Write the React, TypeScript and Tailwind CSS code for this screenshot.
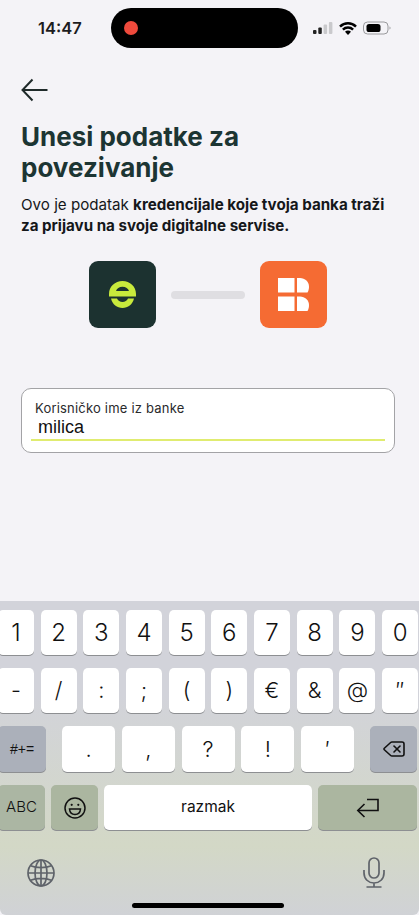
import { ReactNode } from "react";
import { Delete } from "lucide-react";

const inter = "font-['Inter',sans-serif]";

const row1 = ["1", "2", "3", "4", "5", "6", "7", "8", "9", "0"];
const row2 = ["-", "/", ":", ";", "(", ")", "€", "&", "@", "″"];
const row3 = [".", ",", "?", "!", "′"];

const Key = ({ children, className = "" }: { children: ReactNode; className?: string }) => (
  <div
    className={`flex items-center justify-center rounded-[5px] bg-white text-[#111] shadow-[0_1px_0_#8d8f92] ${className}`}
  >
    {children}
  </div>
);

const StatusBar = () => (
  <div className="flex h-[40px] items-center mt-2 shrink-0">
    <span className={`${inter} ml-[38px] w-[73px] text-[16.500px] font-semibold text-[#1c1c1e]`}>14:47</span>
    <div className="flex h-[40px] w-[187px] items-center rounded-[20px] bg-black pl-[13px]">
      <div className="h-[14px] w-[14px] rounded-full bg-[#ef4a3c]" />
    </div>
    <div className="ml-[15px] flex items-center">
      <svg width="20" height="14" viewBox="0 0 20 14">
        <rect x="0" y="9" width="3.500" height="4" rx="1" fill="#222" />
        <rect x="5.300" y="6.500" width="3.500" height="6.500" rx="1" fill="#222" />
        <rect x="10.600" y="3.500" width="3.500" height="9.500" rx="1" fill="#c9c9cc" />
        <rect x="15.900" y="1" width="3.500" height="12" rx="1" fill="#c9c9cc" />
      </svg>
      <svg width="18" height="13" viewBox="0 0 18 13" className="ml-[6px]">
        <path d="M1 4.600a11.500 11.500 0 0 1 16 0" fill="none" stroke="#000" strokeWidth="2.500" />
        <path d="M3.900 7.600a7.400 7.400 0 0 1 10.200 0" fill="none" stroke="#000" strokeWidth="2.500" />
        <path d="M6 9.700 9 12.900l3-3.200a4.200 4.200 0 0 0-6 0z" fill="#000" />
      </svg>
      <svg width="28" height="14" viewBox="0 0 28 14" className="ml-[6px]">
        <rect x="0.500" y="1" width="24.500" height="12" rx="4" fill="none" stroke="#9a9a9d" />
        <rect x="3.500" y="3" width="14" height="8" rx="2.600" fill="#000" />
        <path d="M26.500 5.500v3c.6-.2 1-.8 1-1.500s-.4-1.300-1-1.500z" fill="#9a9a9d" />
      </svg>
    </div>
  </div>
);

const EmoneyLogo = () => (
  <div className="flex h-[67px] w-[67px] items-center justify-center rounded-[9px] bg-[#1c3230]">
    <svg width="27" height="27" viewBox="0 0 27 27" fill="#c8ea3c">
      <path
        d="M0 15.500V13C0 5.500 6 0 13.500 0S27 5.500 27 13v2.500zM7 10h13C19.200 7.300 16.800 5.700 13.500 5.700S7.800 7.300 7 10z"
        fillRule="evenodd"
      />
      <path d="M2 17.500h6C9 19.700 11 21 13.500 21s4.500-1.300 5.500-3.500h6C23.500 23.500 19 27 13.500 27S3.500 23.500 2 17.500z" />
    </svg>
  </div>
);

const BankLogo = () => (
  <div className="flex h-[67px] w-[67px] items-center justify-center rounded-[9px] bg-[#f56b33]">
    <svg width="31" height="33" viewBox="0 0 31 33" fill="#fff">
      <rect x="0" y="0" width="16.500" height="14.500" />
      <path d="M19 0h3c5 0 9 4 9 8.500 0 2.300-.5 4.300-1.500 6H19z" />
      <rect x="0" y="18.500" width="16.500" height="14.500" />
      <path d="M19 18.500h3c5 0 9 4 9 8.500 0 2.300-.5 4.300-1.500 6H19z" />
    </svg>
  </div>
);

const GlobeIcon = () => (
  <svg width="28" height="28" viewBox="0 0 28 28" fill="none" stroke="#5f636a" strokeWidth="1.700">
    <circle cx="14" cy="14" r="13" />
    <ellipse cx="14" cy="14" rx="6" ry="13" />
    <path d="M14 1v26M1 14h26M3.500 6.800c6 2.400 15 2.400 21 0M3.500 21.200c6-2.400 15-2.400 21 0" />
  </svg>
);

const MicIcon = () => (
  <svg width="22" height="31" viewBox="0 0 22 31" fill="none" stroke="#5f636a" strokeWidth="1.700">
    <rect x="6" y="1" width="10" height="20" rx="5" />
    <path d="M1 13v3c0 6 4.500 10 10 10s10-4 10-10v-3M11 26v4M3.500 30h15" />
  </svg>
);

const Keyboard = () => (
  <div
    className={`${inter} mt-auto flex h-[314px] shrink-0 flex-col overflow-hidden rounded-b-[6px] bg-gradient-to-b from-[#d2d3da] from-30% via-[#d3d8c6] via-78% to-[#d0d2d6] pt-[9px]`}
  >
    <div className="-ml-[2px] grid h-[45px] w-[420px] grid-cols-10 gap-x-[6.800px] text-[24px] font-light">
      {row1.map((k) => (
        <Key key={k}>{k}</Key>
      ))}
    </div>
    <div className="-ml-[2px] mt-[13px] grid h-[45px] w-[420px] grid-cols-10 gap-x-[6.800px] text-[22px] font-light">
      {row2.map((k) => (
        <Key key={k}>{k}</Key>
      ))}
    </div>
    <div className="mt-[13px] flex h-[46px] text-[22px] font-light">
      <Key className="-ml-[2px] w-[48px] !bg-[#abb0ba] font-['Liberation_Sans',sans-serif] text-[14px] !font-normal">#+=</Key>
      <div className="ml-[16px] flex gap-x-[6.750px]">
        {row3.map((k) => (
          <Key key={k} className="w-[53px]">
            {k}
          </Key>
        ))}
      </div>
      <Key className="ml-[16px] w-[47px] !bg-[#abb0ba]">
        <Delete size={24} strokeWidth={1.6} />
      </Key>
    </div>
    <div className="mt-[13px] flex h-[45px] gap-x-[6px]">
      <Key className="-ml-[2px] w-[47px] !bg-[#abb6a3] text-[15px] font-light">ABC</Key>
      <Key className="w-[47px] !bg-[#abb6a0]">
        <svg width="24" height="24" viewBox="0 0 24 24" fill="none" stroke="#111" strokeWidth="1.500">
          <circle cx="12" cy="12" r="10" />
          <path d="M6.500 13h11c-.3 3.500-2.700 5.500-5.500 5.500S6.800 16.500 6.500 13z" />
          <circle cx="8.700" cy="8.800" r="1.100" fill="#111" stroke="none" />
          <circle cx="15.300" cy="8.800" r="1.100" fill="#111" stroke="none" />
        </svg>
      </Key>
      <Key className="w-[208px] pb-[2px] text-[15.500px]">razmak</Key>
      <Key className="w-[99px] !bg-[#abb6a0]">
        <svg width="23" height="20" viewBox="0 0 23 20" fill="none" stroke="#111" strokeWidth="1.600">
          <path d="M11 1.500h11v11H2" />
          <path d="M8.500 6 1.800 12.500 8.500 19" />
        </svg>
      </Key>
    </div>
    <div className="mt-[27px] flex items-center justify-between pl-[27px] pr-[34px]">
      <GlobeIcon />
      <MicIcon />
    </div>
    <div className="ml-[132px] mt-[15px] h-[5px] w-[152px] rounded-full bg-black" />
  </div>
);

export default function App() {
  return (
    <div className="flex h-[915px] w-[419px] flex-col overflow-hidden bg-[#f4f3f7]">
      <StatusBar />
      <div className="mt-[30px] pl-[21px]">
        <svg width="27" height="24" viewBox="0 0 27 24" fill="none" stroke="#1f2a2a" strokeWidth="2">
          <path d="M26.500 12H1.500" />
          <path d="M11.500 1.500 1.500 12l10 10.500" />
        </svg>
      </div>
      <h1 className={`${inter} mt-[19px] px-[21px] text-[26px] font-bold leading-[31px] text-[#1c3533]`}>
        Unesi podatke za
        <br />
        povezivanje
      </h1>
      <p className={`${inter} mt-[11px] whitespace-nowrap px-[21px] text-[15.150px] leading-[21px] text-[#15171a]`}>
        Ovo je podatak <b className="font-bold">kredencijale koje tvoja banka traži</b>
        <br />
        <b className="font-bold">za prijavu na svoje digitalne servise.</b>
      </p>
      <div className="mt-[25px] flex items-center justify-center gap-x-[15px] pr-[3px]">
        <EmoneyLogo />
        <div className="h-[8px] w-[74px] rounded-full bg-[#dfdee2]" />
        <BankLogo />
      </div>
      <div className="mx-[21px] mt-[60px] h-[65px] w-[374px] rounded-[10px] border border-[#a3a3a6] bg-white pl-[9px] pr-[9px] pt-[10px]">
        <div className={`${inter} pl-[4px] text-[13px] leading-[18px] tracking-[0.2px] text-[#2a2a2c]`}>
          Korisničko ime iz banke
        </div>
        <div className="h-[24px] border-b-2 border-[#e0ec70] pl-[7px] font-['Liberation_Sans',sans-serif] text-[18px] leading-[21px] text-[#111]">
          milica
        </div>
      </div>
      <Keyboard />
    </div>
  );
}
